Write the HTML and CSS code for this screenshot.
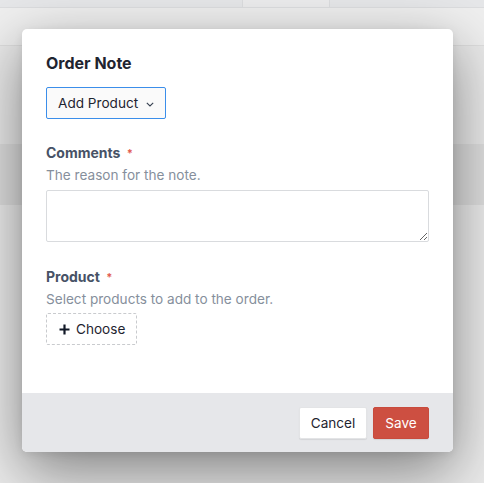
FILE: index.html
```html
<!DOCTYPE html>
<html lang="en">
<head>
<meta charset="utf-8">
<title>Order Note</title>
<link rel="stylesheet" href="styles.css">
</head>
<body>
<div class="page">
  <div class="topbar"><div class="cell c1"></div><div class="cell c2"></div><div class="cell c3"></div></div>
  <div class="band1"></div>
  <div class="gap"></div>
  <div class="band2"></div>
</div>
<div class="overlay">
  <div class="modal">
    <div class="modal-body">
      <h2 class="title">Order Note</h2>
      <button class="btn-add">Add Product <svg class="chev" width="8" height="5" viewBox="0 0 8 5"><path d="M0.8 0.8 L4 4 L7.2 0.8" fill="none" stroke="#374151" stroke-width="1.1"/></svg></button>

      <div class="field first">
        <div class="label">Comments <span class="req">*</span></div>
        <div class="desc">The reason for the note.</div>
        <textarea class="textarea"></textarea>
      </div>

      <div class="field second">
        <div class="label">Product <span class="req">*</span></div>
        <div class="desc">Select products to add to the order.</div>
        <button class="btn-choose"><svg width="11" height="11" viewBox="0 0 11 11"><path d="M5.5 0.5 V10.5 M0.5 5.5 H10.5" stroke="#111827" stroke-width="2.2"/></svg>Choose</button>
      </div>
    </div>
    <div class="modal-footer">
      <button class="btn-cancel">Cancel</button>
      <button class="btn-save">Save</button>
    </div>
  </div>
</div>
</body>
</html>
```

FILE: styles.css
```css
html, body {
  margin: 0;
  padding: 0;
}
body {
  width: 484px;
  height: 483px;
  overflow: hidden;
  background: #ebebeb;
  font-family: Inter, "Noto Sans", sans-serif;
  position: relative;
}
.page {
  display: flex;
  flex-direction: column;
}
.topbar {
  height: 7px;
  display: grid;
  grid-template-columns: 243px 87px 1fr;
  border-bottom: 1px solid #dcdddf;
  background: #e6e7e9;
}
.cell.c1, .cell.c2 {
  border-right: 1px solid #dcdddf;
}
.cell.c2 {
  background: #ececed;
}
.band1 {
  height: 37px;
  background: #efefef;
  border-bottom: 1px solid #dedede;
}
.gap {
  height: 98px;
  background: #e9e9e9;
}
.band2 {
  height: 61px;
  background: #dedede;
}
.overlay {
  position: absolute;
  inset: 0;
  padding: 29px 31px 0 22px;
}
.modal {
  width: 431px;
  background: #ffffff;
  border-radius: 5px;
  overflow: hidden;
  box-shadow: 0 20px 60px rgba(0,0,0,0.45), 0 2px 10px rgba(0,0,0,0.08);
}
.modal-body {
  padding: 24px 24px 48px 24px;
  display: flex;
  flex-direction: column;
  align-items: flex-start;
}
.title {
  margin: 0;
  font-size: 16px;
  line-height: 20px;
  font-weight: 700;
  color: #1f2430;
}
.btn-add {
  margin-top: 14px;
  height: 32px;
  width: 120px;
  box-sizing: border-box;
  border: 1px solid #3b8eea;
  border-radius: 2px;
  background: #fafafa;
  font-family: inherit;
  font-size: 13.6px;
  color: #1f2430;
  padding: 0 0 0 11px;
  display: flex;
  align-items: center;
  gap: 8px;
}
.chev {
  margin-top: 2px;
}
.field {
  display: flex;
  flex-direction: column;
  align-items: flex-start;
  width: 100%;
}
.field.first {
  margin-top: 24px;
}
.field.second {
  margin-top: 25px;
}
.label {
  font-size: 14px;
  line-height: 20px;
  font-weight: 700;
  color: #475266;
}
.req {
  color: #e25b50;
  font-size: 11px;
  margin-left: 3px;
  vertical-align: 1px;
}
.desc {
  margin-top: 2px;
  font-size: 13.6px;
  line-height: 20px;
  color: #868f9c;
}
.textarea {
  margin-top: 5px;
  width: 100%;
  height: 52px;
  box-sizing: border-box;
  border: 1px solid #d9dbde;
  border-radius: 2px;
  resize: vertical;
  font-family: inherit;
  display: block;
}
.btn-choose {
  margin-top: 4px;
  height: 32px;
  width: 91px;
  box-sizing: border-box;
  border: 1px dashed #c9cbce;
  border-radius: 2px;
  background: #ffffff;
  font-family: inherit;
  font-size: 13.6px;
  color: #1f2430;
  display: flex;
  align-items: center;
  padding: 0 0 0 12px;
  gap: 6px;
}
.modal-footer {
  height: 59px;
  box-sizing: border-box;
  background: #e6e7ea;
  display: flex;
  justify-content: flex-end;
  align-items: flex-start;
  padding: 14px 24px 0 0;
  gap: 6px;
}
.btn-cancel, .btn-save {
  height: 32px;
  box-sizing: border-box;
  border-radius: 2px;
  font-family: inherit;
  font-size: 13.6px;
  padding: 0;
}
.btn-cancel {
  width: 68px;
  background: #ffffff;
  border: 1px solid #e3e4e6;
  color: #1f2430;
  box-shadow: 0 1px 1px rgba(0,0,0,0.08);
}
.btn-save {
  width: 56px;
  background: #cd4f41;
  border: 1px solid #c84b3d;
  color: #ffffff;
  box-shadow: 0 1px 1px rgba(0,0,0,0.08);
}
```
